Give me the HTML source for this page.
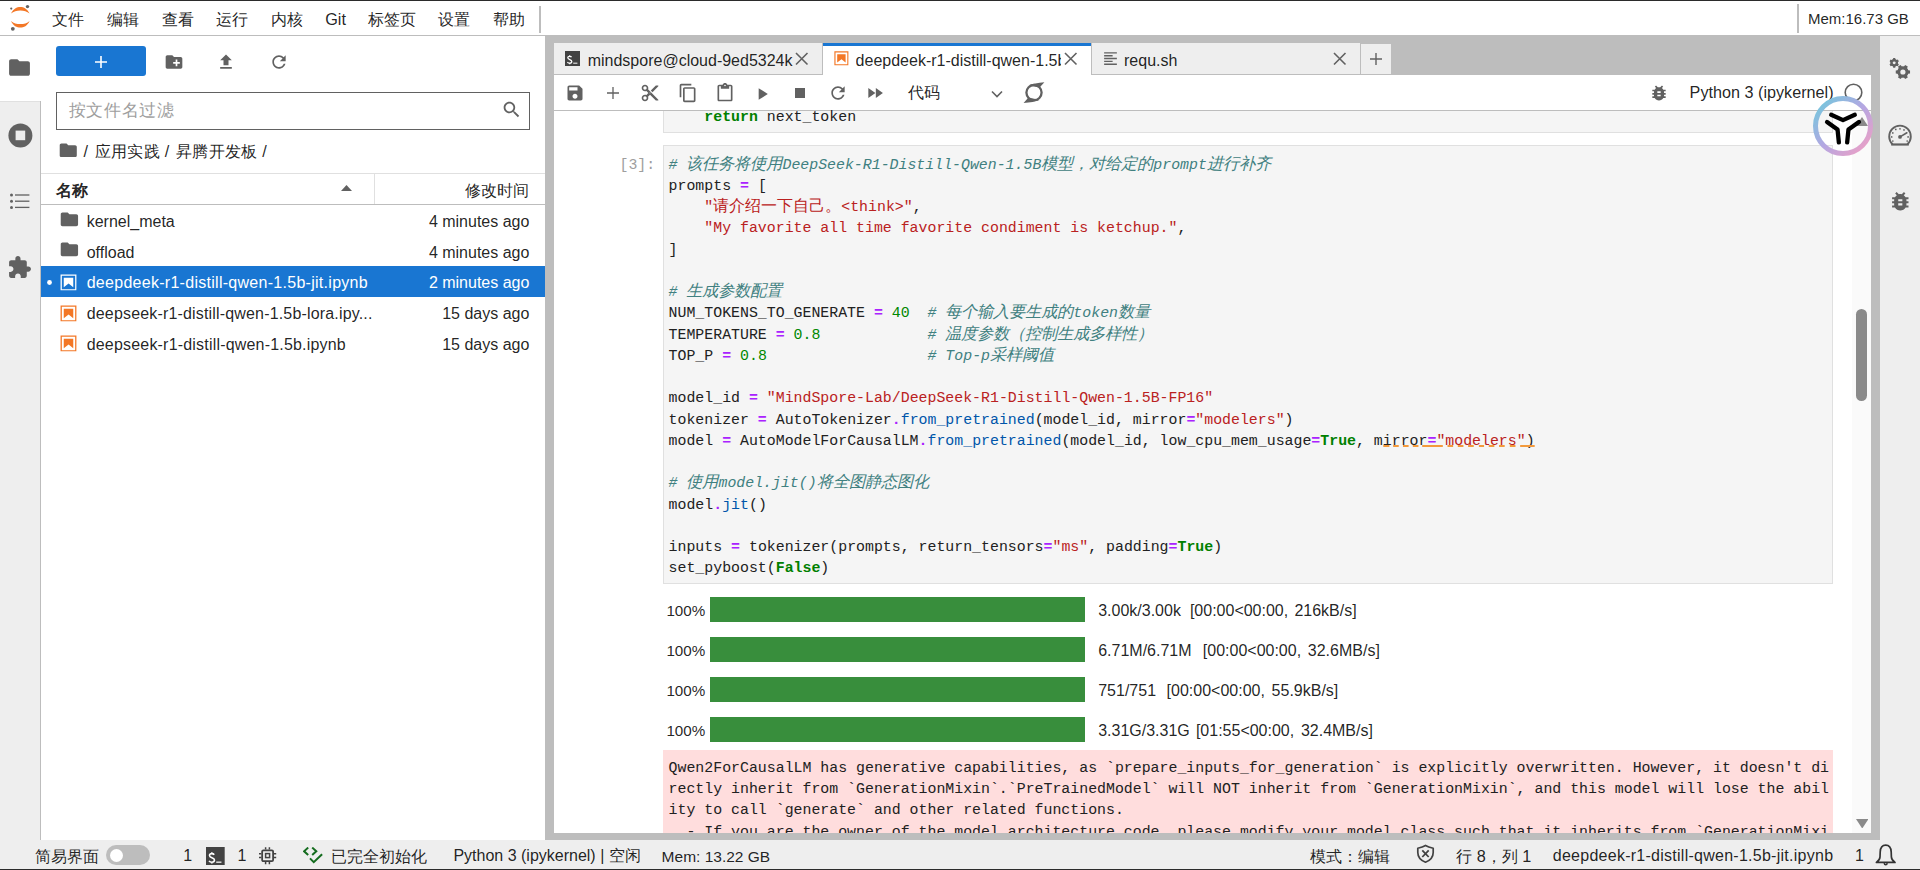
<!DOCTYPE html>
<html><head><meta charset="utf-8"><title>JupyterLab</title>
<style>
*{box-sizing:border-box;margin:0;padding:0}
html,body{width:1920px;height:870px;overflow:hidden;background:#fff}
body{position:relative;font-family:"Liberation Sans",sans-serif}
.a{position:absolute}
.t{position:absolute;white-space:pre}
.k{font-weight:bold;color:#008000}
.o{font-weight:bold;color:#aa22ff}
.n{color:#008800}
.s{color:#ba2121}
.c{color:#408080;font-style:italic}
.p{color:#0055aa}
.z{font-size:16.25px}
</style></head><body>

<div class="a" style="left:0px;top:0px;width:1920px;height:1px;background:#2b2b2b;"></div>
<div class="a" style="left:0px;top:869px;width:1920px;height:1px;background:#2b2b2b;"></div>
<div class="a" style="left:0px;top:35px;width:1920px;height:1px;background:#bdbdbd;"></div>
<svg class="a" style="left:0px;top:0px;" width="40" height="36" viewBox="0 0 40 36"><path d="M11 13.6C13.3 8.8 16.8 7 20.3 7C23.8 7 27.3 8.8 29.6 13.6C27 11.4 24 10.5 20.3 10.5C16.6 10.5 13.6 11.4 11 13.6Z" fill="#f37726"/><path d="M11 20.9C13.3 25.7 16.8 27.6 20.3 27.6C23.8 27.6 27.3 25.7 29.6 20.9C27 23.1 24 24.1 20.3 24.1C16.6 24.1 13.6 23.1 11 20.9Z" fill="#f37726"/><circle cx="27.5" cy="6.6" r="1.7" fill="#616161"/><circle cx="11.25" cy="8.6" r="1.1" fill="#616161"/><circle cx="12.8" cy="28.85" r="1.9" fill="#616161"/></svg>
<div class="t" style="left:52.2px;top:9.21px;font-size:16.25px;line-height:20.31px;color:rgba(0,0,0,.87);font-family:'Liberation Sans',sans-serif;">文件</div>
<div class="t" style="left:107px;top:9.21px;font-size:16.25px;line-height:20.31px;color:rgba(0,0,0,.87);font-family:'Liberation Sans',sans-serif;">编辑</div>
<div class="t" style="left:162px;top:9.21px;font-size:16.25px;line-height:20.31px;color:rgba(0,0,0,.87);font-family:'Liberation Sans',sans-serif;">查看</div>
<div class="t" style="left:216px;top:9.21px;font-size:16.25px;line-height:20.31px;color:rgba(0,0,0,.87);font-family:'Liberation Sans',sans-serif;">运行</div>
<div class="t" style="left:271.2px;top:9.21px;font-size:16.25px;line-height:20.31px;color:rgba(0,0,0,.87);font-family:'Liberation Sans',sans-serif;">内核</div>
<div class="t" style="left:325.2px;top:9.21px;font-size:16.25px;line-height:20.31px;color:rgba(0,0,0,.87);font-family:'Liberation Sans',sans-serif;">Git</div>
<div class="t" style="left:367.5px;top:9.21px;font-size:16.25px;line-height:20.31px;color:rgba(0,0,0,.87);font-family:'Liberation Sans',sans-serif;">标签页</div>
<div class="t" style="left:438.4px;top:9.21px;font-size:16.25px;line-height:20.31px;color:rgba(0,0,0,.87);font-family:'Liberation Sans',sans-serif;">设置</div>
<div class="t" style="left:492.9px;top:9.21px;font-size:16.25px;line-height:20.31px;color:rgba(0,0,0,.87);font-family:'Liberation Sans',sans-serif;">帮助</div>
<div class="a" style="left:539px;top:6px;width:2px;height:27px;background:#bdbdbd;"></div>
<div class="a" style="left:1797px;top:4px;width:2px;height:29px;background:#bdbdbd;"></div>
<div class="t" style="left:1808px;top:10.42px;font-size:15px;line-height:18.75px;color:rgba(0,0,0,.87);font-family:'Liberation Sans',sans-serif;">Mem:16.73 GB</div>
<div class="a" style="left:0px;top:101px;width:40px;height:739px;background:#eeeeee;border-top:1px solid #e0e0e0"></div>
<div class="a" style="left:40px;top:101px;width:1px;height:739px;background:#bdbdbd;"></div>
<svg class="a" style="left:7.1px;top:55.2px;" width="25" height="25" viewBox="0 0 24 24"><path fill="#616161" d="M10 4H4c-1.1 0-1.99.9-1.99 2L2 18c0 1.1.9 2 2 2h16c1.1 0 2-.9 2-2V8c0-1.1-.9-2-2-2h-8l-2-2z"/></svg>
<svg class="a" style="left:5.6px;top:120.6px;" width="28.8" height="28.8" viewBox="0 0 24 24"><circle cx="12" cy="12" r="10" fill="#616161"/><rect x="8" y="8" width="8" height="8" fill="#eeeeee"/></svg>
<svg class="a" style="left:8px;top:190px;" width="24" height="22" viewBox="0 0 24 22"><circle cx="3.5" cy="5" r="1.5" fill="#616161"/><circle cx="3.5" cy="11.2" r="1.5" fill="#616161"/><circle cx="3.5" cy="17.4" r="1.5" fill="#616161"/><rect x="7" y="4.35" width="14.4" height="1.3" fill="#616161"/><rect x="7" y="10.55" width="14.4" height="1.3" fill="#616161"/><rect x="7" y="16.75" width="14.4" height="1.3" fill="#616161"/></svg>
<svg class="a" style="left:7.4px;top:255px;" width="25" height="25" viewBox="0 0 24 24"><path fill="#616161" d="M20.5 11H19V7c0-1.1-.9-2-2-2h-4V3.5C13 2.12 11.88 1 10.5 1S8 2.12 8 3.5V5H4c-1.1 0-1.99.9-1.99 2v3.8H3.5c1.49 0 2.7 1.21 2.7 2.7s-1.21 2.7-2.7 2.7H2V20c0 1.1.9 2 2 2h3.8v-1.5c0-1.49 1.21-2.7 2.7-2.7 1.49 0 2.7 1.21 2.7 2.7V22H17c1.1 0 2-.9 2-2v-4h1.5c1.38 0 2.5-1.120 2.5-2.5S21.88 11 20.5 11z"/></svg>
<div class="a" style="left:56px;top:46px;width:90px;height:30px;background:#1976d2;border-radius:3px"></div>
<svg class="a" style="left:94px;top:55px;" width="14" height="14" viewBox="0 0 14 14"><path d="M7 1V13M1 7H13" stroke="#fff" stroke-width="1.6"/></svg>
<svg class="a" style="left:164px;top:51.6px;" width="20" height="20" viewBox="0 0 24 24"><path fill="#616161" d="M20 6h-8l-2-2H4c-1.11 0-1.99.89-1.99 2L2 18c0 1.11.89 2 2 2h16c1.11 0 2-.89 2-2V8c0-1.11-.89-2-2-2zm-1 8h-3v3h-2v-3h-3v-2h3V9h2v3h3v2z"/></svg>
<svg class="a" style="left:216px;top:52.3px;" width="20" height="20" viewBox="0 0 24 24"><path fill="#616161" d="M9 16h6v-6h4l-7-7-7 7h4zm-4 2h14v2H5z"/></svg>
<svg class="a" style="left:269px;top:52px;" width="20" height="20" viewBox="0 0 24 24"><path fill="#616161" d="M17.65 6.35C16.2 4.9 14.21 4 12 4c-4.42 0-7.990 3.580-7.990 8s3.570 8 7.990 8c3.730 0 6.840-2.550 7.730-6h-2.080c-.820 2.330-3.040 4-5.650 4-3.310 0-6-2.690-6-6s2.690-6 6-6c1.660 0 3.140.690 4.220 1.780L13 11h7V4l-2.350 2.350z"/></svg>
<div class="a" style="left:56px;top:92px;width:474px;height:38px;background:#fff;border:1px solid #616161"></div>
<div class="t" style="left:68.8px;top:100.09px;font-size:17.4px;line-height:21.75px;color:#9e9e9e;font-family:'Liberation Sans',sans-serif;letter-spacing:0.6px">按文件名过滤</div>
<svg class="a" style="left:501.4px;top:99.3px;" width="21.3" height="21.3" viewBox="0 0 24 24"><path fill="#616161" d="M15.5 14h-.79l-.28-.27C15.41 12.59 16 11.11 16 9.5 16 5.91 13.09 3 9.5 3S3 5.91 3 9.5 5.91 16 9.5 16c1.61 0 3.09-.59 4.23-1.57l.27.28v.79l5 4.99L20.49 19l-4.99-5zm-6 0C7.01 14 5 11.990 5 9.5S7.01 5 9.5 5 14 7.01 14 9.5 11.99 14 9.5 14z"/></svg>
<svg class="a" style="left:58.4px;top:139.6px;" width="20.5" height="20.5" viewBox="0 0 24 24"><path fill="#616161" d="M10 4H4c-1.1 0-1.99.9-1.99 2L2 18c0 1.1.9 2 2 2h16c1.1 0 2-.9 2-2V8c0-1.1-.9-2-2-2h-8l-2-2z"/></svg>
<div class="t" style="left:83.4px;top:141.21px;font-size:16.25px;line-height:20.31px;color:rgba(0,0,0,.87);font-family:'Liberation Sans',sans-serif;">/</div>
<div class="t" style="left:94.5px;top:141.21px;font-size:16.25px;line-height:20.31px;color:rgba(0,0,0,.87);font-family:'Liberation Sans',sans-serif;letter-spacing:0.4px">应用实践</div>
<div class="t" style="left:164.8px;top:141.21px;font-size:16.25px;line-height:20.31px;color:rgba(0,0,0,.87);font-family:'Liberation Sans',sans-serif;">/</div>
<div class="t" style="left:175.8px;top:141.21px;font-size:16.25px;line-height:20.31px;color:rgba(0,0,0,.87);font-family:'Liberation Sans',sans-serif;letter-spacing:0.4px">昇腾开发板</div>
<div class="t" style="left:262.2px;top:141.21px;font-size:16.25px;line-height:20.31px;color:rgba(0,0,0,.87);font-family:'Liberation Sans',sans-serif;">/</div>
<div class="a" style="left:41px;top:173px;width:504px;height:1px;background:#e0e0e0;"></div>
<div class="a" style="left:41px;top:204px;width:504px;height:1px;background:#bdbdbd;"></div>
<div class="a" style="left:374px;top:174px;width:1px;height:30px;background:#e0e0e0;"></div>
<div class="t" style="left:56px;top:180.21px;font-size:16.25px;line-height:20.31px;color:rgba(0,0,0,.87);font-family:'Liberation Sans',sans-serif;font-weight:bold">名称</div>
<svg class="a" style="left:341px;top:185px;" width="11" height="6" viewBox="0 0 11 6"><path d="M0 6L5.5 0L11 6Z" fill="#616161"/></svg>
<div class="t" style="right:1390.6px;top:180.21px;font-size:16.25px;line-height:20.31px;color:rgba(0,0,0,.87);font-family:'Liberation Sans',sans-serif;">修改时间</div>
<svg class="a" style="left:58.6px;top:208.7px;" width="20.8" height="20.8" viewBox="0 0 24 24"><path fill="#616161" d="M10 4H4c-1.1 0-1.99.9-1.99 2L2 18c0 1.1.9 2 2 2h16c1.1 0 2-.9 2-2V8c0-1.1-.9-2-2-2h-8l-2-2z"/></svg>
<div class="t" style="left:86.7px;top:211.85px;font-size:16px;line-height:20.0px;color:rgba(0,0,0,.87);font-family:'Liberation Sans',sans-serif;letter-spacing:0px">kernel_meta</div>
<div class="t" style="right:1390.6px;top:211.85px;font-size:16px;line-height:20.0px;color:rgba(0,0,0,.87);font-family:'Liberation Sans',sans-serif;">4 minutes ago</div>
<svg class="a" style="left:58.6px;top:239.45px;" width="20.8" height="20.8" viewBox="0 0 24 24"><path fill="#616161" d="M10 4H4c-1.1 0-1.99.9-1.99 2L2 18c0 1.1.9 2 2 2h16c1.1 0 2-.9 2-2V8c0-1.1-.9-2-2-2h-8l-2-2z"/></svg>
<div class="t" style="left:86.7px;top:242.6px;font-size:16px;line-height:20.0px;color:rgba(0,0,0,.87);font-family:'Liberation Sans',sans-serif;letter-spacing:0px">offload</div>
<div class="t" style="right:1390.6px;top:242.6px;font-size:16px;line-height:20.0px;color:rgba(0,0,0,.87);font-family:'Liberation Sans',sans-serif;">4 minutes ago</div>
<div class="a" style="left:41px;top:266px;width:504px;height:31px;background:#1976d2;"></div>
<svg class="a" style="left:47px;top:279.6px;" width="5" height="5" viewBox="0 0 5 5"><circle cx="2.5" cy="2.5" r="2.4" fill="#fff"/></svg>
<svg class="a" style="left:59.3px;top:272.9px;" width="19" height="19" viewBox="0 0 22 22"><path fill="#fff" d="M18.7 3.3v15.4H3.3V3.3h15.4m1.5-1.5H1.8v18.3h18.3l.1-18.3z"/><path fill="#fff" d="M16.5 16.5l-5.4-4.3-5.6 4.3v-11h11z"/></svg>
<div class="t" style="left:86.7px;top:273.35px;font-size:16px;line-height:20.0px;color:#fff;font-family:'Liberation Sans',sans-serif;letter-spacing:0.28px">deepdeek-r1-distill-qwen-1.5b-jit.ipynb</div>
<div class="t" style="right:1390.6px;top:273.35px;font-size:16px;line-height:20.0px;color:#fff;font-family:'Liberation Sans',sans-serif;">2 minutes ago</div>
<svg class="a" style="left:59.3px;top:303.65px;" width="19" height="19" viewBox="0 0 22 22"><path fill="#f37726" d="M18.7 3.3v15.4H3.3V3.3h15.4m1.5-1.5H1.8v18.3h18.3l.1-18.3z"/><path fill="#f37726" d="M16.5 16.5l-5.4-4.3-5.6 4.3v-11h11z"/></svg>
<div class="t" style="left:86.7px;top:304.1px;font-size:16px;line-height:20.0px;color:rgba(0,0,0,.87);font-family:'Liberation Sans',sans-serif;letter-spacing:0.17px">deepseek-r1-distill-qwen-1.5b-lora.ipy...</div>
<div class="t" style="right:1390.6px;top:304.1px;font-size:16px;line-height:20.0px;color:rgba(0,0,0,.87);font-family:'Liberation Sans',sans-serif;">15 days ago</div>
<svg class="a" style="left:59.3px;top:334.4px;" width="19" height="19" viewBox="0 0 22 22"><path fill="#f37726" d="M18.7 3.3v15.4H3.3V3.3h15.4m1.5-1.5H1.8v18.3h18.3l.1-18.3z"/><path fill="#f37726" d="M16.5 16.5l-5.4-4.3-5.6 4.3v-11h11z"/></svg>
<div class="t" style="left:86.7px;top:334.85px;font-size:16px;line-height:20.0px;color:rgba(0,0,0,.87);font-family:'Liberation Sans',sans-serif;letter-spacing:0.19px">deepseek-r1-distill-qwen-1.5b.ipynb</div>
<div class="t" style="right:1390.6px;top:334.85px;font-size:16px;line-height:20.0px;color:rgba(0,0,0,.87);font-family:'Liberation Sans',sans-serif;">15 days ago</div>
<div class="a" style="left:545px;top:36px;width:1335px;height:804px;background:#bdbdbd;"></div>
<div class="a" style="left:1880px;top:36px;width:40px;height:804px;background:#eeeeee;"></div>
<div class="a" style="left:554px;top:43px;width:268px;height:31px;background:#eeeeee;"></div>
<div class="a" style="left:822px;top:43px;width:1px;height:31px;background:#bdbdbd;"></div>
<div class="a" style="left:823px;top:43px;width:268px;height:32px;background:#ffffff;"></div>
<div class="a" style="left:823px;top:43px;width:268px;height:3px;background:#1976d2;"></div>
<div class="a" style="left:1091px;top:43px;width:1px;height:31px;background:#bdbdbd;"></div>
<div class="a" style="left:1092px;top:43px;width:268px;height:31px;background:#eeeeee;"></div>
<div class="a" style="left:1360px;top:43px;width:1px;height:31px;background:#bdbdbd;"></div>
<div class="a" style="left:1361px;top:44px;width:30px;height:30px;background:#eeeeee;"></div>
<svg class="a" style="left:565px;top:51px;" width="15" height="15" viewBox="0 0 15 15"><rect width="15" height="15" fill="#424242"/><path d="M6.6 6.2C6.2 5.6 5.5 5.3 4.6 5.3C3.5 5.3 2.8 5.9 2.8 6.8C2.8 8.9 6.8 8.2 6.8 10.5C6.8 11.5 6 12.2 4.7 12.2C3.7 12.2 2.9 11.8 2.4 11.1M4.7 4.2V5.3M4.7 12.2V13.3" stroke="#fff" stroke-width="1.25" fill="none"/><rect x="8.2" y="11.6" width="4.2" height="1.2" fill="#ddd"/></svg>
<div class="t" style="left:587.7px;top:51.05px;font-size:16px;line-height:20.0px;color:rgba(0,0,0,.87);font-family:'Liberation Sans',sans-serif;width:205px;overflow:hidden">mindspore@cloud-9ed5324k</div>
<svg class="a" style="left:795.25px;top:52.25px;" width="13.5" height="13.5" viewBox="-6.75 -6.75 13.5 13.5"><path d="M-5.75 -5.75L5.75 5.75M5.75 -5.75L-5.75 5.75" stroke="#616161" stroke-width="1.6" fill="none"/></svg>
<svg class="a" style="left:833.3px;top:50.4px;" width="16.8" height="16.8" viewBox="0 0 22 22"><path fill="#f37726" d="M18.7 3.3v15.4H3.3V3.3h15.4m1.5-1.5H1.8v18.3h18.3l.1-18.3z"/><path fill="#f37726" d="M16.5 16.5l-5.4-4.3-5.6 4.3v-11h11z"/></svg>
<div class="t" style="left:855.6px;top:51.05px;font-size:16px;line-height:20.0px;color:rgba(0,0,0,.87);font-family:'Liberation Sans',sans-serif;width:205px;overflow:hidden">deepdeek-r1-distill-qwen-1.5b-jit.ipynb</div>
<svg class="a" style="left:1064.25px;top:52.25px;" width="13.5" height="13.5" viewBox="-6.75 -6.75 13.5 13.5"><path d="M-5.75 -5.75L5.75 5.75M5.75 -5.75L-5.75 5.75" stroke="#616161" stroke-width="1.6" fill="none"/></svg>
<svg class="a" style="left:1102.3px;top:49.5px;" width="17" height="17" viewBox="0 0 24 24"><path fill="#616161" d="M15 15H3v2h12v-2zm0-8H3v2h12V7zM3 13h18v-2H3v2zm0 8h18v-2H3v2zM3 3v2h18V3H3z"/></svg>
<div class="t" style="left:1124px;top:51.05px;font-size:16px;line-height:20.0px;color:rgba(0,0,0,.87);font-family:'Liberation Sans',sans-serif;">requ.sh</div>
<svg class="a" style="left:1333.25px;top:52.25px;" width="13.5" height="13.5" viewBox="-6.75 -6.75 13.5 13.5"><path d="M-5.75 -5.75L5.75 5.75M5.75 -5.75L-5.75 5.75" stroke="#616161" stroke-width="1.6" fill="none"/></svg>
<svg class="a" style="left:1369px;top:52px;" width="14" height="14" viewBox="0 0 14 14"><path d="M7 1V13M1 7H13" stroke="#616161" stroke-width="1.4"/></svg>
<div class="a" style="left:554px;top:75px;width:1317px;height:758px;background:#ffffff;"></div>
<div class="a" style="left:554px;top:110px;width:1317px;height:1px;background:#bdbdbd;"></div>
<svg class="a" style="left:564.9px;top:82.5px;" width="20" height="20" viewBox="0 0 24 24"><path fill="#616161" d="M17 3H5c-1.11 0-2 .9-2 2v14c0 1.1.89 2 2 2h14c1.1 0 2-.9 2-2V7l-4-4zm-5 16c-1.66 0-3-1.34-3-3s1.34-3 3-3 3 1.34 3 3-1.34 3-3 3zm3-10H5V5h10v4z"/></svg>
<svg class="a" style="left:607px;top:86.9px;" width="12" height="12" viewBox="0 0 12 12"><path d="M6 0V12M0 6H12" stroke="#616161" stroke-width="1.3"/></svg>
<svg class="a" style="left:640px;top:83px;" width="20" height="20" viewBox="0 0 24 24"><path fill="#616161" d="M9.64 7.64c.23-.5.36-1.05.36-1.64 0-2.21-1.79-4-4-4S2 3.79 2 6s1.79 4 4 4c.59 0 1.14-.13 1.64-.36L10 12l-2.36 2.36C7.14 14.13 6.59 14 6 14c-2.21 0-4 1.79-4 4s1.79 4 4 4 4-1.79 4-4c0-.59-.13-1.14-.36-1.64L12 14l7 7h3v-1L9.64 7.64zM6 8c-1.1 0-2-.89-2-2s.9-2 2-2 2 .89 2 2-.9 2-2 2zm0 12c-1.1 0-2-.89-2-2s.9-2 2-2 2 .89 2 2-.9 2-2 2zm6-7.5c-.28 0-.5-.22-.5-.5s.22-.5.5-.5.5.22.5.5-.22.5-.5.5zM19 3l-6 6 2 2 7-7V3z"/></svg>
<svg class="a" style="left:678.3px;top:83.3px;" width="20" height="20" viewBox="0 0 24 24"><path fill="#616161" d="M16 1H4c-1.1 0-2 .9-2 2v14h2V3h12V1zm3 4H8c-1.1 0-2 .9-2 2v14c0 1.1.9 2 2 2h11c1.1 0 2-.9 2-2V7c0-1.1-.9-2-2-2zm0 16H8V7h11v14z"/></svg>
<svg class="a" style="left:715px;top:83.2px;" width="20" height="20" viewBox="0 0 24 24"><path fill="#616161" d="M19 2h-4.18C14.4.84 13.3 0 12 0c-1.3 0-2.4.84-2.82 2H5c-1.1 0-2 .9-2 2v16c0 1.1.9 2 2 2h14c1.1 0 2-.9 2-2V4c0-1.1-.9-2-2-2zm-7 0c.55 0 1 .45 1 1s-.45 1-1 1-1-.45-1-1 .45-1 1-1zm7 18H5V4h2v3h10V4h2v16z"/></svg>
<svg class="a" style="left:752.3px;top:83.5px;" width="20" height="20" viewBox="0 0 24 24"><path fill="#616161" d="M8 5v14l11-7z"/></svg>
<svg class="a" style="left:790px;top:83px;" width="20" height="20" viewBox="0 0 24 24"><path fill="#616161" d="M6 6h12v12H6z"/></svg>
<svg class="a" style="left:827.5px;top:83.2px;" width="20" height="20" viewBox="0 0 24 24"><path fill="#616161" d="M17.65 6.35C16.2 4.9 14.21 4 12 4c-4.42 0-7.990 3.580-7.990 8s3.570 8 7.990 8c3.730 0 6.840-2.550 7.730-6h-2.080c-.820 2.330-3.040 4-5.650 4-3.310 0-6-2.690-6-6s2.690-6 6-6c1.660 0 3.140.690 4.220 1.780L13 11h7V4l-2.350 2.350z"/></svg>
<svg class="a" style="left:864.7px;top:83.2px;" width="20" height="20" viewBox="0 0 24 24"><path fill="#616161" d="M4 18l8.5-6L4 6v12zm9-12v12l8.5-6L13 6z"/></svg>
<div class="t" style="left:908.3px;top:82.21px;font-size:16.25px;line-height:20.31px;color:rgba(0,0,0,.87);font-family:'Liberation Sans',sans-serif;">代码</div>
<svg class="a" style="left:991px;top:90px;" width="12" height="8" viewBox="0 0 12 8"><path d="M1 1.5L6 6.5L11 1.5" stroke="#616161" stroke-width="1.6" fill="none"/></svg>
<svg class="a" style="left:1015px;top:78px;" width="40" height="30" viewBox="0 0 40 30"><circle cx="19" cy="14.6" r="7.6" stroke="#616161" stroke-width="2.3" fill="none"/><path d="M13.5 7.3C17 5.6 23 5 29.4 4.2L24.6 9.6Z" fill="#616161"/><path d="M24.5 21.9C21 23.6 15 24.2 8.6 25L13.4 19.6Z" fill="#616161"/></svg>
<svg class="a" style="left:1649.2px;top:83.3px;" width="20" height="20" viewBox="0 0 24 24"><path fill="#616161" d="M20 8h-2.81c-.45-.78-1.07-1.45-1.82-1.96L17 4.41 15.59 3l-2.17 2.17C12.96 5.06 12.49 5 12 5c-.49 0-.96.06-1.41.17L8.41 3 7 4.41l1.62 1.63C7.88 6.55 7.26 7.22 6.81 8H4v2h2.09c-.05.33-.09.66-.09 1v1H4v2h2v1c0 .34.04.67.09 1H4v2h2.81c1.04 1.79 2.97 3 5.190 3s4.150-1.210 5.190-3H20v-2h-2.090c.050-.330.090-.660.090-1v-1h2v-2h-2v-1c0-.340-.040-.670-.090-1H20V8zm-6 8h-4v-2h4v2zm0-4h-4v-2h4v2z"/></svg>
<div class="t" style="left:1689.6px;top:81.96px;font-size:16.2px;line-height:20.25px;color:rgba(0,0,0,.87);font-family:'Liberation Sans',sans-serif;">Python 3 (ipykernel)</div>
<svg class="a" style="left:1844px;top:83px;" width="19" height="19" viewBox="0 0 19 19"><circle cx="9.5" cy="9.5" r="8.3" stroke="#616161" stroke-width="1.6" fill="none"/></svg>
<div class="a" style="left:1852px;top:111px;width:19px;height:722px;background:#fafafa;"></div>
<div class="a" style="left:1856px;top:309px;width:11px;height:92px;background:#8a8a8a;border-radius:5.5px"></div>
<svg class="a" style="left:1855.5px;top:818.5px;" width="12.5" height="9.5" viewBox="0 0 12.5 9.5"><path d="M0 0H12.5L6.25 9.5Z" fill="#8a8a8a"/></svg>
<svg class="a" style="left:1884px;top:52px;" width="32" height="32" viewBox="0 0 32 32"><g fill="#616161"><path d="M13.83 11.57L14.86 12.36L13.84 14.13L12.64 13.63L11.39 14.35L11.22 15.64L9.18 15.64L9.01 14.35L7.76 13.63L6.56 14.13L5.54 12.36L6.57 11.57L6.57 10.13L5.54 9.34L6.56 7.57L7.76 8.07L9.01 7.35L9.18 6.06L11.22 6.06L11.39 7.35L12.64 8.07L13.84 7.57L14.86 9.34L13.83 10.13Z"/><circle cx="10.2" cy="10.85" r="3.7"/><path d="M24.11 18.23L26.04 18.48L26.04 21.52L24.11 21.77L23.04 23.63L23.78 25.42L21.16 26.94L19.97 25.39L17.83 25.39L16.64 26.94L14.02 25.42L14.76 23.63L13.69 21.77L11.76 21.52L11.76 18.48L13.69 18.23L14.76 16.37L14.02 14.58L16.64 13.06L17.83 14.61L19.97 14.61L21.16 13.06L23.78 14.58L23.04 16.37Z"/><circle cx="18.9" cy="20" r="5.5"/></g><circle cx="10.2" cy="10.85" r="1.45" fill="#eee"/><circle cx="18.9" cy="20" r="2.6" fill="#eee"/></svg>
<svg class="a" style="left:1884px;top:120px;" width="32" height="32" viewBox="0 0 32 32"><path d="M8.6 24.3A10.8 10.8 0 1 1 23.4 24.3" fill="none" stroke="#616161" stroke-width="1.9"/><path d="M7.2 24.5H24.8" stroke="#616161" stroke-width="2.2"/><g fill="#616161"><circle cx="8.8" cy="12.9" r="0.85"/><circle cx="7.7" cy="16.9" r="0.85"/><circle cx="8.8" cy="21" r="0.85"/><circle cx="11.8" cy="9.4" r="0.85"/><circle cx="16" cy="8.8" r="0.85"/><circle cx="20" cy="9.9" r="0.85"/><circle cx="24.1" cy="16.9" r="0.85"/><circle cx="23.2" cy="21" r="0.85"/><circle cx="16" cy="16.9" r="1.9"/></g><path d="M16 16.9L22.9 12.8" stroke="#616161" stroke-width="1.6" stroke-linecap="round"/></svg>
<svg class="a" style="left:1887.6px;top:188.9px;" width="24.6" height="24.6" viewBox="0 0 24 24"><path fill="#616161" d="M20 8h-2.81c-.45-.78-1.07-1.45-1.82-1.96L17 4.41 15.59 3l-2.17 2.17C12.96 5.06 12.49 5 12 5c-.49 0-.96.06-1.41.17L8.41 3 7 4.41l1.62 1.63C7.88 6.55 7.26 7.22 6.81 8H4v2h2.09c-.05.33-.09.66-.09 1v1H4v2h2v1c0 .34.04.67.09 1H4v2h2.81c1.04 1.79 2.97 3 5.190 3s4.150-1.210 5.190-3H20v-2h-2.090c.050-.330.090-.660.090-1v-1h2v-2h-2v-1c0-.340-.040-.670-.090-1H20V8zm-6 8h-4v-2h4v2zm0-4h-4v-2h4v2z"/></svg>
<div class="a" style="left:663px;top:111px;width:1170px;height:22px;background:#f5f5f5;border:1px solid #e0e0e0;border-top:none"></div>
<div class="a" style="left:663px;top:145px;width:1170px;height:439px;background:#f5f5f5;border:1px solid #e0e0e0"></div>
<div class="t" style="right:1264.8px;top:155.94px;font-size:14.88px;line-height:18.6px;color:#9e9e9e;font-family:'Liberation Mono',monospace;">[3]:</div>
<div class="t" style="left:704.32px;top:108.34px;font-size:14.88px;line-height:18.6px;color:#212121;font-family:'Liberation Mono',monospace;"><span class="k">return</span> next_token</div>
<div class="t" style="left:668.6px;top:155.54px;font-size:14.88px;line-height:18.6px;color:#212121;font-family:'Liberation Mono',monospace;"><span class="c"># <span class="z">该任务将使用</span>DeepSeek-R1-Distill-Qwen-1.5B<span class="z">模型，对给定的</span>prompt<span class="z">进行补齐</span></span></div>
<div class="t" style="left:668.6px;top:176.79px;font-size:14.88px;line-height:18.6px;color:#212121;font-family:'Liberation Mono',monospace;">prompts <span class="o">=</span> [</div>
<div class="t" style="left:668.6px;top:198.04px;font-size:14.88px;line-height:18.6px;color:#212121;font-family:'Liberation Mono',monospace;">    <span class="s">"<span class="z">请介绍一下自己。</span>&lt;think&gt;"</span>,</div>
<div class="t" style="left:668.6px;top:219.29px;font-size:14.88px;line-height:18.6px;color:#212121;font-family:'Liberation Mono',monospace;">    <span class="s">"My favorite all time favorite condiment is ketchup."</span>,</div>
<div class="t" style="left:668.6px;top:240.54px;font-size:14.88px;line-height:18.6px;color:#212121;font-family:'Liberation Mono',monospace;">]</div>
<div class="t" style="left:668.6px;top:283.04px;font-size:14.88px;line-height:18.6px;color:#212121;font-family:'Liberation Mono',monospace;"><span class="c"># <span class="z">生成参数配置</span></span></div>
<div class="t" style="left:668.6px;top:304.29px;font-size:14.88px;line-height:18.6px;color:#212121;font-family:'Liberation Mono',monospace;">NUM_TOKENS_TO_GENERATE <span class="o">=</span> <span class="n">40</span>  <span class="c"># <span class="z">每个输入要生成的</span>token<span class="z">数量</span></span></div>
<div class="t" style="left:668.6px;top:325.54px;font-size:14.88px;line-height:18.6px;color:#212121;font-family:'Liberation Mono',monospace;">TEMPERATURE <span class="o">=</span> <span class="n">0.8</span>            <span class="c"># <span class="z">温度参数（控制生成多样性）</span></span></div>
<div class="t" style="left:668.6px;top:346.79px;font-size:14.88px;line-height:18.6px;color:#212121;font-family:'Liberation Mono',monospace;">TOP_P <span class="o">=</span> <span class="n">0.8</span>                  <span class="c"># Top-p<span class="z">采样阈值</span></span></div>
<div class="t" style="left:668.6px;top:389.29px;font-size:14.88px;line-height:18.6px;color:#212121;font-family:'Liberation Mono',monospace;">model_id <span class="o">=</span> <span class="s">"MindSpore-Lab/DeepSeek-R1-Distill-Qwen-1.5B-FP16"</span></div>
<div class="t" style="left:668.6px;top:410.54px;font-size:14.88px;line-height:18.6px;color:#212121;font-family:'Liberation Mono',monospace;">tokenizer <span class="o">=</span> AutoTokenizer<span class="o">.</span><span class="p">from_pretrained</span>(model_id, mirror<span class="o">=</span><span class="s">"modelers"</span>)</div>
<div class="t" style="left:668.6px;top:431.79px;font-size:14.88px;line-height:18.6px;color:#212121;font-family:'Liberation Mono',monospace;">model <span class="o">=</span> AutoModelForCausalLM<span class="o">.</span><span class="p">from_pretrained</span>(model_id, low_cpu_mem_usage<span class="o">=</span><span class="k">True</span>, mirror<span class="o">=</span><span class="s">"modelers"</span>)</div>
<div class="t" style="left:668.6px;top:474.29px;font-size:14.88px;line-height:18.6px;color:#212121;font-family:'Liberation Mono',monospace;"><span class="c"># <span class="z">使用</span>model.jit()<span class="z">将全图静态图化</span></span></div>
<div class="t" style="left:668.6px;top:495.54px;font-size:14.88px;line-height:18.6px;color:#212121;font-family:'Liberation Mono',monospace;">model<span class="o">.</span><span class="p">jit</span>()</div>
<div class="t" style="left:668.6px;top:538.04px;font-size:14.88px;line-height:18.6px;color:#212121;font-family:'Liberation Mono',monospace;">inputs <span class="o">=</span> tokenizer(prompts, return_tensors<span class="o">=</span><span class="s">"ms"</span>, padding<span class="o">=</span><span class="k">True</span>)</div>
<div class="t" style="left:668.6px;top:559.29px;font-size:14.88px;line-height:18.6px;color:#212121;font-family:'Liberation Mono',monospace;">set_pyboost(<span class="k">False</span>)</div>
<svg class="a" style="left:1380px;top:444.8px;" width="160" height="2" viewBox="0 0 160 2"><rect x="3.28" y="0" width="6.09" height="2" fill="#f39a3c"/><rect x="13.12" y="0" width="5.62" height="2" fill="#f39a3c"/><rect x="22.97" y="0" width="5.62" height="2" fill="#f39a3c"/><rect x="32.81" y="0" width="5.62" height="2" fill="#f39a3c"/><rect x="42.19" y="0" width="20.62" height="2" fill="#f39a3c"/><rect x="67.50" y="0" width="5.62" height="2" fill="#f39a3c"/><rect x="77.81" y="0" width="5.62" height="2" fill="#f39a3c"/><rect x="88.12" y="0" width="5.62" height="2" fill="#f39a3c"/><rect x="98.90" y="0" width="5.16" height="2" fill="#f39a3c"/><rect x="108.75" y="0" width="5.62" height="2" fill="#f39a3c"/><rect x="119.06" y="0" width="5.62" height="2" fill="#f39a3c"/><rect x="129.84" y="0" width="5.62" height="2" fill="#f39a3c"/><rect x="140.15" y="0" width="14.53" height="2" fill="#f39a3c"/></svg>
<div class="t" style="left:666.4px;top:601.23px;font-size:15.2px;line-height:19.0px;color:rgba(0,0,0,.87);font-family:'Liberation Sans',sans-serif;">100%</div>
<div class="a" style="left:710px;top:597px;width:375px;height:25px;background:#388e3c;"></div>
<div class="t" style="left:1098.2px;top:601.45px;font-size:16px;line-height:20.0px;color:rgba(0,0,0,.87);font-family:'Liberation Sans',sans-serif;">3.00k/3.00k</div>
<div class="t" style="left:1189.9px;top:601.45px;font-size:16px;line-height:20.0px;color:rgba(0,0,0,.87);font-family:'Liberation Sans',sans-serif;">[00:00&lt;00:00,</div>
<div class="t" style="left:1294.4px;top:601.45px;font-size:16px;line-height:20.0px;color:rgba(0,0,0,.87);font-family:'Liberation Sans',sans-serif;">216kB/s]</div>
<div class="t" style="left:666.4px;top:641.23px;font-size:15.2px;line-height:19.0px;color:rgba(0,0,0,.87);font-family:'Liberation Sans',sans-serif;">100%</div>
<div class="a" style="left:710px;top:637px;width:375px;height:25px;background:#388e3c;"></div>
<div class="t" style="left:1098.2px;top:641.45px;font-size:16px;line-height:20.0px;color:rgba(0,0,0,.87);font-family:'Liberation Sans',sans-serif;">6.71M/6.71M</div>
<div class="t" style="left:1202.8px;top:641.45px;font-size:16px;line-height:20.0px;color:rgba(0,0,0,.87);font-family:'Liberation Sans',sans-serif;">[00:00&lt;00:00,</div>
<div class="t" style="left:1307.8px;top:641.45px;font-size:16px;line-height:20.0px;color:rgba(0,0,0,.87);font-family:'Liberation Sans',sans-serif;">32.6MB/s]</div>
<div class="t" style="left:666.4px;top:681.23px;font-size:15.2px;line-height:19.0px;color:rgba(0,0,0,.87);font-family:'Liberation Sans',sans-serif;">100%</div>
<div class="a" style="left:710px;top:677px;width:375px;height:25px;background:#388e3c;"></div>
<div class="t" style="left:1098.2px;top:681.45px;font-size:16px;line-height:20.0px;color:rgba(0,0,0,.87);font-family:'Liberation Sans',sans-serif;">751/751</div>
<div class="t" style="left:1166.6px;top:681.45px;font-size:16px;line-height:20.0px;color:rgba(0,0,0,.87);font-family:'Liberation Sans',sans-serif;">[00:00&lt;00:00,</div>
<div class="t" style="left:1271.6000000000001px;top:681.45px;font-size:16px;line-height:20.0px;color:rgba(0,0,0,.87);font-family:'Liberation Sans',sans-serif;">55.9kB/s]</div>
<div class="t" style="left:666.4px;top:721.23px;font-size:15.2px;line-height:19.0px;color:rgba(0,0,0,.87);font-family:'Liberation Sans',sans-serif;">100%</div>
<div class="a" style="left:710px;top:717px;width:375px;height:25px;background:#388e3c;"></div>
<div class="t" style="left:1098.2px;top:721.45px;font-size:16px;line-height:20.0px;color:rgba(0,0,0,.87);font-family:'Liberation Sans',sans-serif;">3.31G/3.31G</div>
<div class="t" style="left:1195.9px;top:721.45px;font-size:16px;line-height:20.0px;color:rgba(0,0,0,.87);font-family:'Liberation Sans',sans-serif;">[01:55&lt;00:00,</div>
<div class="t" style="left:1300.9px;top:721.45px;font-size:16px;line-height:20.0px;color:rgba(0,0,0,.87);font-family:'Liberation Sans',sans-serif;">32.4MB/s]</div>
<div class="a" style="left:663px;top:750px;width:1170px;height:83px;background:#ffdddd;"></div>
<div class="a" style="left:663px;top:750px;width:1170px;height:83px;overflow:hidden">
<div class="t" style="left:5.6px;top:7.92px;font-size:14.88px;line-height:21.25px;font-family:'Liberation Mono',monospace;color:#212121">Qwen2ForCausalLM has generative capabilities, as `prepare_inputs_for_generation` is explicitly overwritten. However, it doesn&#x27;t di</div>
<div class="t" style="left:5.6px;top:29.17px;font-size:14.88px;line-height:21.25px;font-family:'Liberation Mono',monospace;color:#212121">rectly inherit from `GenerationMixin`.`PreTrainedModel` will NOT inherit from `GenerationMixin`, and this model will lose the abil</div>
<div class="t" style="left:5.6px;top:50.42px;font-size:14.88px;line-height:21.25px;font-family:'Liberation Mono',monospace;color:#212121">ity to call `generate` and other related functions.</div>
<div class="t" style="left:5.6px;top:71.67px;font-size:14.88px;line-height:21.25px;font-family:'Liberation Mono',monospace;color:#212121">  - If you are the owner of the model architecture code, please modify your model class such that it inherits from `GenerationMixi</div>
</div>
<svg class="a" style="left:1856px;top:117px;" width="12" height="9" viewBox="0 0 12 9"><path d="M0 9H12L6 0Z" fill="#8a8a8a"/></svg>
<svg class="a" style="left:1810px;top:93px;" width="66" height="66" viewBox="-33 -33 66 66"><defs><linearGradient id="lg" x1="0" y1="0" x2="1" y2="1"><stop offset="0" stop-color="#6ccbdc"/><stop offset="0.5" stop-color="#b4a7e2"/><stop offset="1" stop-color="#f39fc2"/></linearGradient></defs><circle cx="0" cy="0" r="27.5" fill="none" stroke="url(#lg)" stroke-width="5"/><g stroke="#000" stroke-width="4.3" stroke-linecap="round" stroke-linejoin="round" fill="none" transform="translate(0 0.4)"><path d="M-11.8 -11.6L0 -6.3L11.8 -11.6"/><path d="M-11.8 -11.6L0 -6.3L11.8 -11.6" transform="rotate(120)"/><path d="M-11.8 -11.6L0 -6.3L11.8 -11.6" transform="rotate(240)"/></g></svg>
<div class="a" style="left:0px;top:840px;width:1920px;height:29px;background:#eeeeee;"></div>
<div class="a" style="left:545px;top:833px;width:1335px;height:7px;background:#bdbdbd;"></div>
<div class="t" style="left:35px;top:846.21px;font-size:16.25px;line-height:20.31px;color:rgba(0,0,0,.87);font-family:'Liberation Sans',sans-serif;">简易界面</div>
<div class="a" style="left:105.8px;top:845px;width:44.2px;height:20px;background:#bdbdbd;border-radius:10px"></div>
<div class="a" style="left:109.5px;top:848.5px;width:13px;height:13px;border-radius:50%;background:#fff"></div>
<div class="t" style="left:183.3px;top:846.45px;font-size:16px;line-height:20.0px;color:rgba(0,0,0,.87);font-family:'Liberation Sans',sans-serif;">1</div>
<svg class="a" style="left:206.2px;top:846.7px;" width="18.7" height="18.7" viewBox="0 0 15 15"><rect width="15" height="15" fill="#424242"/><path d="M6.6 6.2C6.2 5.6 5.5 5.3 4.6 5.3C3.5 5.3 2.8 5.9 2.8 6.8C2.8 8.9 6.8 8.2 6.8 10.5C6.8 11.5 6 12.2 4.7 12.2C3.7 12.2 2.9 11.8 2.4 11.1M4.7 4.2V5.3M4.7 12.2V13.3" stroke="#fff" stroke-width="1.25" fill="none"/><rect x="8.2" y="11.6" width="4.2" height="1.2" fill="#ddd"/></svg>
<div class="t" style="left:237.5px;top:846.45px;font-size:16px;line-height:20.0px;color:rgba(0,0,0,.87);font-family:'Liberation Sans',sans-serif;">1</div>
<svg class="a" style="left:258px;top:845.5px;" width="20" height="20" viewBox="0 0 20 20"><rect x="4.15" y="4.3" width="10.95" height="10.9" rx="1.2" stroke="#424242" stroke-width="1.8" fill="none"/><rect x="7.6" y="7.6" width="4" height="4" stroke="#424242" stroke-width="1.5" fill="none"/><g stroke="#424242" stroke-width="1.5"><path d="M7.6 1.2V3.5M11.4 1.2V3.5M7.6 15.9V18.2M11.4 15.9V18.2M1 7.75H3.3M1 11.5H3.3M15.9 7.75H18.2M15.9 11.5H18.2"/></g></svg>
<svg class="a" style="left:303px;top:846.9px;" width="22" height="18" viewBox="0 0 22 18"><g stroke="#146c1e" stroke-width="2" fill="none"><path d="M5.2 0.6L1.1 4.3L5.2 8M9.2 0.6L13.3 4.3L9.2 8"/><path d="M7 11.4L10.75 15.2L19.1 7.3"/></g></svg>
<div class="t" style="left:330.6px;top:846.21px;font-size:16.25px;line-height:20.31px;color:rgba(0,0,0,.87);font-family:'Liberation Sans',sans-serif;">已完全初始化</div>
<div class="t" style="left:453.4px;top:846.45px;font-size:16px;line-height:20.0px;color:rgba(0,0,0,.87);font-family:'Liberation Sans',sans-serif;">Python 3 (ipykernel) | 空闲</div>
<div class="t" style="left:661.6px;top:846.94px;font-size:15.5px;line-height:19.38px;color:rgba(0,0,0,.87);font-family:'Liberation Sans',sans-serif;">Mem: 13.22 GB</div>
<div class="t" style="left:1310.2px;top:846.21px;font-size:16.25px;line-height:20.31px;color:rgba(0,0,0,.87);font-family:'Liberation Sans',sans-serif;">模式：编辑</div>
<svg class="a" style="left:1415.5px;top:844px;" width="19" height="20" viewBox="0 0 19 20"><path d="M9.5 1.4C11.5 2.6 14 3.5 17.2 4.3V8.5C17.2 13 14 16.5 9.5 18.2C5 16.5 1.8 13 1.8 8.5V4.3C5 3.5 7.5 2.6 9.5 1.4Z" stroke="#424242" stroke-width="1.7" fill="none" stroke-linejoin="round"/><path d="M6.3 6.3L12.7 13M12.7 6.3L6.3 13" stroke="#424242" stroke-width="1.8"/></svg>
<div class="t" style="left:1456.3px;top:846.21px;font-size:16.25px;line-height:20.31px;color:rgba(0,0,0,.87);font-family:'Liberation Sans',sans-serif;">行 8，列 1</div>
<div class="t" style="left:1552.8px;top:846.45px;font-size:16px;line-height:20.0px;color:rgba(0,0,0,.87);font-family:'Liberation Sans',sans-serif;letter-spacing:0.26px">deepdeek-r1-distill-qwen-1.5b-jit.ipynb</div>
<div class="t" style="left:1855px;top:846.45px;font-size:16px;line-height:20.0px;color:rgba(0,0,0,.87);font-family:'Liberation Sans',sans-serif;">1</div>
<svg class="a" style="left:1874.5px;top:844px;" width="22" height="23" viewBox="0 0 22 23"><path d="M10.7 1.2C7.3 1.2 5.4 4 5.2 8L5 13C4.9 15.5 3.4 17 1.4 18.4H20C18 17 16.5 15.5 16.4 13L16.2 8C16 4 14.1 1.2 10.7 1.2Z" stroke="#333" stroke-width="1.7" fill="none" stroke-linejoin="round"/><path d="M9.2 19.2C9.5 21.3 11.9 21.3 12.2 19.2" stroke="#333" stroke-width="1.6" fill="none"/></svg>
</body></html>
